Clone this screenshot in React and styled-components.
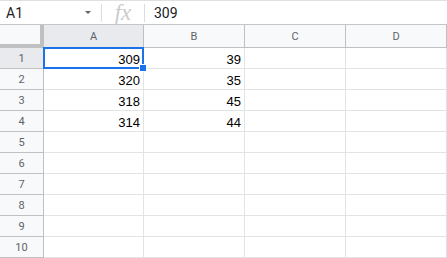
import React from 'react';
import styled, { createGlobalStyle } from 'styled-components';

const GlobalStyle = createGlobalStyle`
  html, body {
    margin: 0;
    padding: 0;
    background: #fff;
    overflow: hidden;
  }
`;

const Page = styled.div`
  width: 447px;
  height: 258px;
  overflow: hidden;
  font-family: Roboto, "Liberation Sans", Arial, sans-serif;
`;

const FormulaBar = styled.div`
  height: 23px;
  display: flex;
  align-items: center;
  border-top: 1px solid #e0e0e0;
  border-bottom: 1px solid #c4c7c5;
`;

const NameBox = styled.div`
  width: 101px;
  display: flex;
  align-items: center;
  justify-content: space-between;
  padding: 0 10px 0 6px;
  box-sizing: border-box;
  font-size: 14px;
  color: #202124;
`;

const Caret = styled.span`
  width: 0;
  height: 0;
  border-left: 3px solid transparent;
  border-right: 3px solid transparent;
  border-top: 3px solid #5f6368;
`;

const Divider = styled.div`
  width: 1px;
  height: 18px;
  background: #dadce0;
`;

const FxLabel = styled.div`
  width: 42px;
  text-align: center;
  font-family: "Liberation Serif", "DejaVu Serif", serif;
  font-style: italic;
  font-size: 23px;
  color: #cbcbcb;
  line-height: 23px;
`;

const FormulaValue = styled.div`
  padding-left: 9px;
  font-size: 14px;
  color: #202124;
`;

const Grid = styled.div`
  display: grid;
  grid-template-columns: 44px 100px 101px 101px 101px;
  grid-template-rows: 23px repeat(10, 21px);
`;

const Corner = styled.div`
  background: #f8f9fa;
  border-right: 4px solid #c0c0c0;
  border-bottom: 4px solid #c0c0c0;
`;

const ColHead = styled.div`
  background: ${p => (p.active ? '#e8eaed' : '#f8f9fa')};
  border-right: 1px solid #c0c0c0;
  border-bottom: 1px solid #c0c0c0;
  display: flex;
  align-items: center;
  justify-content: center;
  font-size: 11px;
  color: #5f6368;
`;

const RowHead = styled.div`
  background: ${p => (p.active ? '#e8eaed' : '#f8f9fa')};
  border-right: 1px solid #c0c0c0;
  border-bottom: 1px solid #c0c0c0;
  display: flex;
  align-items: center;
  justify-content: center;
  font-size: 11px;
  color: #5f6368;
`;

const Cell = styled.div`
  position: relative;
  border-right: 1px solid #e2e3e3;
  border-bottom: 1px solid #e2e3e3;
  display: flex;
  align-items: flex-end;
  justify-content: flex-end;
  padding: 0 3px 1px 0;
  font-family: "Liberation Sans", Arial, sans-serif;
  font-size: 13px;
  color: #000;
`;

const Selection = styled.div`
  position: absolute;
  left: -1px;
  top: -1px;
  right: -1px;
  bottom: -1px;
  border: 2px solid #1a73e8;
  pointer-events: none;
`;

const Handle = styled.div`
  position: absolute;
  right: -4px;
  bottom: -4px;
  width: 6px;
  height: 6px;
  background: #1a73e8;
  border: 1px solid #fff;
  z-index: 2;
`;

const columns = ['A', 'B', 'C', 'D'];
const data = [
  [309, 39],
  [320, 35],
  [318, 45],
  [314, 44],
];

export default function App() {
  const rows = Array.from({ length: 10 }, (_, i) => i);
  return (
    <Page>
      <GlobalStyle />
      <FormulaBar>
        <NameBox>
          A1
          <Caret />
        </NameBox>
        <Divider />
        <FxLabel>fx</FxLabel>
        <Divider />
        <FormulaValue>309</FormulaValue>
      </FormulaBar>
      <Grid>
        <Corner />
        {columns.map((c, i) => (
          <ColHead key={c} active={i === 0}>{c}</ColHead>
        ))}
        {rows.map(r => (
          <React.Fragment key={r}>
            <RowHead active={r === 0}>{r + 1}</RowHead>
            {columns.map((c, ci) => (
              <Cell key={c}>
                {data[r] && data[r][ci] !== undefined ? data[r][ci] : ''}
                {r === 0 && ci === 0 && (
                  <>
                    <Selection />
                    <Handle />
                  </>
                )}
              </Cell>
            ))}
          </React.Fragment>
        ))}
      </Grid>
    </Page>
  );
}
